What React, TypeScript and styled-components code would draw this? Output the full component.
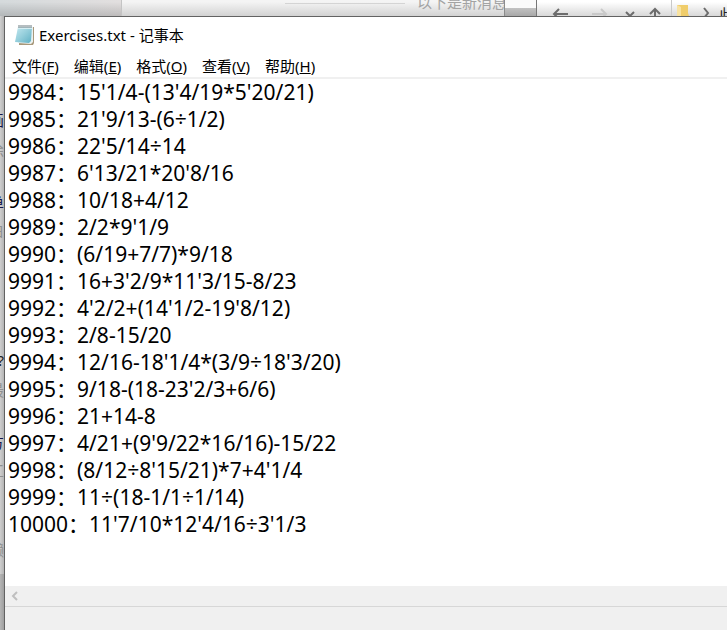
import React, { useState } from "react";
import styled, { createGlobalStyle } from "styled-components";

const GlobalStyle = createGlobalStyle`
  * { box-sizing: border-box; }
  body { margin: 0; overflow: hidden; }
  button, textarea { font: inherit; color: inherit; }
`;

const uiFont = `"Noto Sans", "Noto Sans CJK SC", sans-serif`;

const Desktop = styled.div`
  display: flex;
  flex-direction: column;
  height: 100vh;
  overflow: hidden;
  background: #fff;
  font-family: ${uiFont};
`;

const Backdrop = styled.div`
  display: flex;
  flex: none;
  height: 16px;
  overflow: hidden;
`;

const ChatList = styled.div`
  width: 122px;
  flex: none;
  border-right: 1px solid #c4c4c4;
  background: linear-gradient(to bottom, transparent 2px, rgba(0, 0, 0, 0.16)), linear-gradient(to right, #d5dadc, #e2dfdf);
`;

const ChatPane = styled.div`
  display: flex;
  width: 383px;
  flex: none;
  justify-content: flex-end;
  gap: 12px;
  overflow: hidden;
  border-right: 1px solid #8c8c8c;
  background: linear-gradient(to bottom, #f4f4f4 2px, #d2d2d2);
`;

const Divider = styled.span`
  width: 120px;
  height: 1px;
  margin-top: 3px;
  background: #d4d4d4;
`;

const Notice = styled.span`
  width: 87px;
  height: 16px;
  margin-top: -8px;
  font-size: 15px;
  line-height: 20px;
  white-space: nowrap;
  color: #a3a3a3;
`;

const ScrollGap = styled.div`
  width: 32px;
  flex: none;
  border-right: 1px solid #777;
  background: linear-gradient(to bottom, #fafafa 8px, #c2c2c2 8px, #a8a8a8);
`;

const Explorer = styled.div`
  display: flex;
  flex: 1;
  min-width: 0;
  overflow: hidden;
  background: linear-gradient(to bottom, #fff 2px, #d8d8d8);
`;

const ExplorerBar = styled.svg`
  flex: none;
  width: 182px;
  height: 16px;
`;

const Crumb = styled.span`
  margin-top: 4px;
  font-size: 15px;
  line-height: 20px;
  color: #222;
`;

const Main = styled.div`
  display: flex;
  flex: 1;
  min-height: 0;
`;

const Sliver = styled.div`
  display: flex;
  flex-direction: column;
  flex: none;
  width: 4px;
  overflow: hidden;
  background: linear-gradient(to bottom, transparent 558px, rgba(0, 0, 0, 0.12) 558px),
    linear-gradient(to right, #cfcfcf, #b4b4b4);
`;

const Fragment = styled.span<{ $space: number; $color: string }>`
  flex: none;
  align-self: flex-end;
  height: 20px;
  margin-top: ${(p) => p.$space}px;
  font-size: 15px;
  line-height: 20px;
  color: ${(p) => p.$color};
`;

const Window = styled.main`
  display: flex;
  flex: 1;
  flex-direction: column;
  min-width: 0;
  border-top: 1px solid #626262;
  border-left: 1px solid #626262;
  background: #fff;
`;

const TitleBar = styled.header`
  display: flex;
  align-items: center;
  flex: none;
  gap: 4px;
  height: 36px;
  padding-left: 9px;
`;

const Title = styled.h1`
  margin: 0;
  font-size: 15px;
  font-weight: 400;
  line-height: 20px;
  color: #000;
`;

const MenuBar = styled.nav`
  display: flex;
  align-items: center;
  flex: none;
  gap: 15px;
  height: 26px;
  padding: 2px 0 0 7px;
  border-bottom: 2px solid #f0f0f0;
`;

const MenuButton = styled.button`
  padding: 0;
  border: 0;
  background: none;
  font-size: 15px;
  line-height: 20px;
  color: #000;
  white-space: nowrap;
`;

const Editor = styled.textarea`
  display: block;
  flex: 1;
  min-height: 0;
  width: 100%;
  padding: 0 3px;
  border: 0;
  outline: 0;
  resize: none;
  overflow: hidden;
  white-space: pre;
  background: #fff;
  font-size: 21px;
  line-height: 27px;
  color: #000;
`;

const ScrollBar = styled.div`
  display: flex;
  flex: none;
  height: 20px;
  background: #f0f0f0;
`;

const ScrollButton = styled.button`
  display: flex;
  align-items: center;
  justify-content: center;
  width: 20px;
  padding: 0;
  border: 0;
  background: none;
`;

const StatusBar = styled.footer`
  flex: none;
  height: 24px;
  border-top: 1px solid #d7d7d7;
  background: #f0f0f0;
`;

const menus = [
  { name: "文件", access: "F" },
  { name: "编辑", access: "E" },
  { name: "格式", access: "O" },
  { name: "查看", access: "V" },
  { name: "帮助", access: "H" },
];

const fragments = [
  { text: "画", space: 94, color: "#15154a" },
  { text: "徐", space: 10, color: "#8f8f8f" },
  { text: "单", space: 33, color: "#15154a" },
  { text: "白", space: 7, color: "#8f8f8f" },
  { text: "?", space: 110, color: "#222222" },
  { text: "最", space: 10, color: "#8f8f8f" },
  { text: "方", space: 32, color: "#15154a" },
  { text: "工", space: 8, color: "#8f8f8f" },
  { text: "懒", space: 60, color: "#8f8f8f" },
];

const exercises = [
  "15'1/4-(13'4/19*5'20/21)",
  "21'9/13-(6÷1/2)",
  "22'5/14÷14",
  "6'13/21*20'8/16",
  "10/18+4/12",
  "2/2*9'1/9",
  "(6/19+7/7)*9/18",
  "16+3'2/9*11'3/15-8/23",
  "4'2/2+(14'1/2-19'8/12)",
  "2/8-15/20",
  "12/16-18'1/4*(3/9÷18'3/20)",
  "9/18-(18-23'2/3+6/6)",
  "21+14-8",
  "4/21+(9'9/22*16/16)-15/22",
  "(8/12÷8'15/21)*7+4'1/4",
  "11÷(18-1/1÷1/14)",
  "11'7/10*12'4/16÷3'1/3",
];

const initialText = exercises.map((e, i) => `${9984 + i}：${e}`).join("\n");

function NotepadIcon() {
  return (
    <svg width="21" height="22" viewBox="0 0 21 22" aria-hidden="true">
      <defs>
        <linearGradient id="pad" x1="0" y1="0" x2="1" y2="1">
          <stop offset="0" stopColor="#c3e8f0" />
          <stop offset="0.5" stopColor="#94cedb" />
          <stop offset="1" stopColor="#5fb0c4" />
        </linearGradient>
      </defs>
      <path d="M18 3H20V19L19 21H5V19H18Z" fill="#a8987a" />
      <path d="M5 3H19V18L17 20L4 19Z" fill="#e9f1f1" />
      <path d="M4 3H18L17 17L15 19L1 18Z" fill="url(#pad)" />
      <path d="M4 3H18V5H4Z" fill="#d5edf2" />
      <path d="M5 1v3M7 1v3M9 1v3M11 1v3M13 1v3M15 1v3M17 1v3" stroke="#6d7c82" strokeWidth="1" />
    </svg>
  );
}

export default function App() {
  const [text, setText] = useState(initialText);
  return (
    <Desktop>
      <GlobalStyle />
      <Backdrop>
        <ChatList />
        <ChatPane>
          <Divider />
          <Notice>以下是新消息</Notice>
        </ChatPane>
        <ScrollGap />
        <Explorer>
          <ExplorerBar viewBox="0 0 182 16" aria-hidden="true">
            <g fill="none" strokeWidth="2">
              <path d="M31 14H17M22 9l-5 5 5 5" stroke="#6c6c6c" />
              <path d="M55 14h14M64 9l5 5-5 5" stroke="#c9c9c9" />
              <path d="M89 12l4 4 4-4" stroke="#6c6c6c" />
              <path d="M118 20V9M113 14l5-5 5 5" stroke="#6c6c6c" />
              <path d="M167 8l4 5-4 5" stroke="#6c6c6c" />
            </g>
            <path d="M134.500 0v16" stroke="#c9c9c9" />
            <path d="M140 5h11v8l1 3h-12z" fill="#f0cd6b" />
            <path d="M140 5l4 2v9h-4z" fill="#f9e3a0" />
          </ExplorerBar>
          <Crumb>此</Crumb>
        </Explorer>
      </Backdrop>
      <Main>
        <Sliver aria-hidden="true">
          {fragments.map((f) => (
            <Fragment key={f.text} $space={f.space} $color={f.color}>
              {f.text}
            </Fragment>
          ))}
        </Sliver>
        <Window>
          <TitleBar>
            <NotepadIcon />
            <Title>Exercises.txt - 记事本</Title>
          </TitleBar>
          <MenuBar>
            {menus.map((m) => (
              <MenuButton key={m.access} type="button">
                {m.name}(<u>{m.access}</u>)
              </MenuButton>
            ))}
          </MenuBar>
          <Editor
            aria-label="Exercises.txt"
            spellCheck={false}
            value={text}
            onChange={(e) => setText(e.target.value)}
          />
          <ScrollBar>
            <ScrollButton type="button" aria-label="向左滚动">
              <svg width="8" height="10" viewBox="0 0 8 10" aria-hidden="true">
                <path d="M6 1L2 5l4 4" fill="none" stroke="#bfbfbf" strokeWidth="2" />
              </svg>
            </ScrollButton>
          </ScrollBar>
          <StatusBar />
        </Window>
      </Main>
    </Desktop>
  );
}
